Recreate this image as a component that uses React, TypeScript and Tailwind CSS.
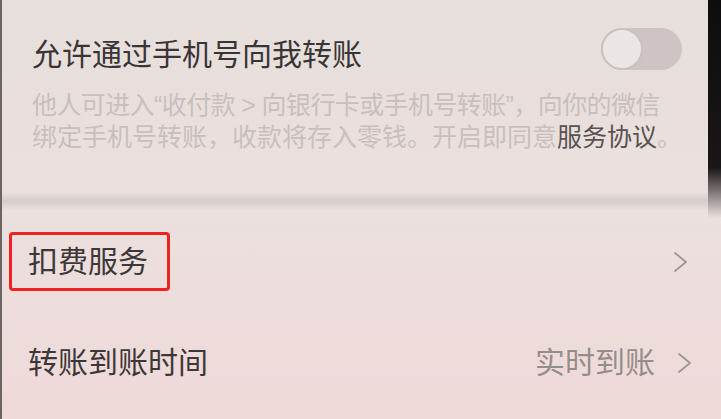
const font = { fontFamily: '"Liberation Sans", "Noto Sans CJK SC", sans-serif' };

const Chevron = () => (
  <svg width="15" height="22" viewBox="0 0 15 22" fill="none">
    <path d="M2 2 L13 11 L2 20" stroke="#9d9594" strokeWidth="1.8" strokeLinecap="round" strokeLinejoin="round" />
  </svg>
);

export default function App() {
  return (
    <div
      className="flex h-[419px] w-[721px] overflow-hidden border-l-2 border-[#6b6463] bg-gradient-to-b from-[#e6dfdc] via-[#ebe0de] to-[#efd9d9]"
      style={font}
    >
      <div className="flex flex-1 flex-col">
        {/* switch section */}
        <div className="pl-[30px] pr-[26px] pt-[28px]">
          <div className="flex items-start justify-between">
            <div className="mt-[6px] text-[30px] leading-[42px] text-[#3a3535]">允许通过手机号向我转账</div>
            <div className="relative h-[42px] w-[81px] rounded-full bg-[#cdc4c3]">
              <div className="absolute left-0 top-0 h-[42px] w-[42px] rounded-full border-2 border-[#c9c1c0] bg-[#ebe5e3]" />
            </div>
          </div>
          <div className="mt-[13px] text-[25px] leading-[32px] text-[#c8bfbd]">
            <div className="whitespace-nowrap tracking-[-0.6px]">他人可进入“收付款 &gt; 向银行卡或手机号转账”，向你的微信</div>
            <div className="whitespace-nowrap">
              绑定手机号转账，收款将存入零钱。开启即同意<span className="text-[#595252]">服务协议</span>。
            </div>
          </div>
        </div>

        {/* divider band */}
        <div className="mt-[39px] h-[18px] bg-gradient-to-b from-transparent via-[#d4cdcb] to-transparent" />

        {/* 扣费服务 */}
        <div className="mt-[22px] flex items-center justify-between pl-[7px] pr-[20px]">
          <div className="flex h-[59px] items-center rounded-[4px] border-[3px] border-[#ee2220] pl-[16px] pr-[19px] text-[30px] leading-none text-[#3d3838]">
            扣费服务
          </div>
          <Chevron />
        </div>

        {/* 转账到账时间 */}
        <div className="mt-[42px] flex h-[60px] items-center justify-between pl-[26px] pr-[16px]">
          <div className="text-[30px] leading-none text-[#3d3838]">转账到账时间</div>
          <div className="flex items-center gap-[22px]">
            <span className="text-[30px] leading-none text-[#958d8c]">实时到账</span>
            <Chevron />
          </div>
        </div>
      </div>

      {/* phone bezel edge */}
      <div className="w-[13px] bg-gradient-to-b from-[#0e0c0c] via-[#1a1616] via-40% to-transparent to-52%" />
    </div>
  );
}
